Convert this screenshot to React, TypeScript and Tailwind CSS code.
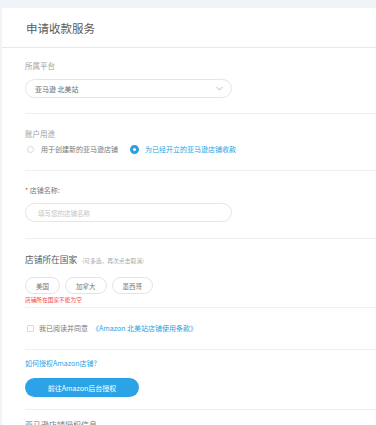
import React from "react";

export default function App() {
  const font = { fontFamily: '"Noto Sans CJK SC", "Noto Sans", sans-serif' };
  return (
    <div className="w-[376px] h-[425px] overflow-hidden bg-[#f0f4f8] pt-[8px] pl-[2px]" style={font}>
      <div className="bg-white w-[374px] h-[417px]">
        <div className="h-[40px] border-b border-[#e8e8e8] pl-[24px] flex items-center">
          <span className="text-[11.5px] leading-[14px] text-[#5a5a5a] pt-[1px]">申请收款服务</span>
        </div>
        <div className="pl-[23px]">
          {/* platform */}
          <div className="pt-[13px] pb-[15px] border-b border-[#f0f0f0]">
            <div className="text-[7.5px] leading-[10px] text-[#a0a0a0]">所属平台</div>
            <div className="mt-[8px] w-[207px] h-[19px] rounded-full border border-[#e6e6e6] flex items-center justify-between pl-[9px] pr-[8px]">
              <span className="text-[7px] leading-[10px] text-[#666]">亚马逊 北美站</span>
              <svg width="7" height="5" viewBox="0 0 7 5" fill="none">
                <path d="M0.5 1 L3.5 4 L6.5 1" stroke="#aaa" strokeWidth="0.8" />
              </svg>
            </div>
          </div>
          {/* usage */}
          <div className="pt-[15px] pb-[16px] border-b border-[#f0f0f0]">
            <div className="text-[7.5px] leading-[10px] text-[#a0a0a0]">账户用途</div>
            <div className="mt-[5px] flex items-center h-[10px] text-[7px] leading-[10px]">
              <span className="ml-[2px] w-[7px] h-[7px] rounded-full border border-[#d9d9d9]" />
              <span className="ml-[7px] text-[#777]">用于创建新的亚马逊店铺</span>
              <span className="ml-[12px] w-[9px] h-[9px] rounded-full border-[3px] border-[#2a9fe3] bg-white" />
              <span className="ml-[6px] text-[#2a9fe3]">为已经开立的亚马逊店铺收款</span>
            </div>
          </div>
          {/* store name */}
          <div className="pt-[14px] pb-[16px] border-b border-[#f0f0f0]">
            <div className="text-[7px] leading-[10px] text-[#777]">
              <span className="text-[#f04a4a]">*</span> 店铺名称:
            </div>
            <div className="mt-[8px] w-[207px] h-[19px] rounded-full border border-[#e6e6e6] flex items-center pl-[12px]">
              <span className="text-[6.5px] leading-[10px] text-[#c4c4c4]">填写您的店铺名称</span>
            </div>
          </div>
          {/* country */}
          <div className="pt-[15px] pb-[3px] border-b border-[#f0f0f0]">
            <div className="flex items-baseline h-[12px] leading-[12px]">
              <span className="text-[8.7px] text-[#5a5a5a]">店铺所在国家</span>
              <span className="ml-[5px] text-[5.8px] text-[#aaa]">(可多选，再次点击取消)</span>
            </div>
            <div className="mt-[11px] flex gap-[5px]">
              {["美国", "加拿大", "墨西哥"].map((c) => (
                <div
                  key={c}
                  className="h-[17px] px-[10px] rounded-full border border-[#e3e3e3] flex items-center text-[6.5px] leading-[10px] text-[#777]"
                >
                  {c}
                </div>
              ))}
            </div>
            <div className="mt-[2px] text-[5.7px] leading-[8px] text-[#f04a4a]">店铺所在国家不能为空</div>
          </div>
          {/* agreement */}
          <div className="pt-[15px] pb-[16px] border-b border-[#f0f0f0]">
            <div className="flex items-center h-[10px] text-[7px] leading-[10px]">
              <span className="ml-[2px] w-[7px] h-[7px] rounded-[1px] border border-[#d9d9d9]" />
              <span className="ml-[5px] text-[#777]">我已阅读并同意</span>
              <span className="ml-[4px] text-[#2a9fe3]">《Amazon 北美站店铺使用条款》</span>
            </div>
          </div>
          {/* auth */}
          <div className="pt-[8px] pb-[12px] border-b border-[#f0f0f0]">
            <div className="text-[7px] leading-[10px] text-[#2a9fe3]">如何授权Amazon店铺?</div>
            <div className="mt-[10px] w-[114px] h-[19px] rounded-full bg-[#2ba3e6] flex items-center justify-center">
              <span className="text-[7px] leading-[10px] text-white">前往Amazon后台授权</span>
            </div>
          </div>
          <div className="pt-[10px]">
            <div className="text-[8px] leading-[10px] text-[#777]">亚马逊店铺授权信息</div>
          </div>
        </div>
      </div>
    </div>
  );
}
